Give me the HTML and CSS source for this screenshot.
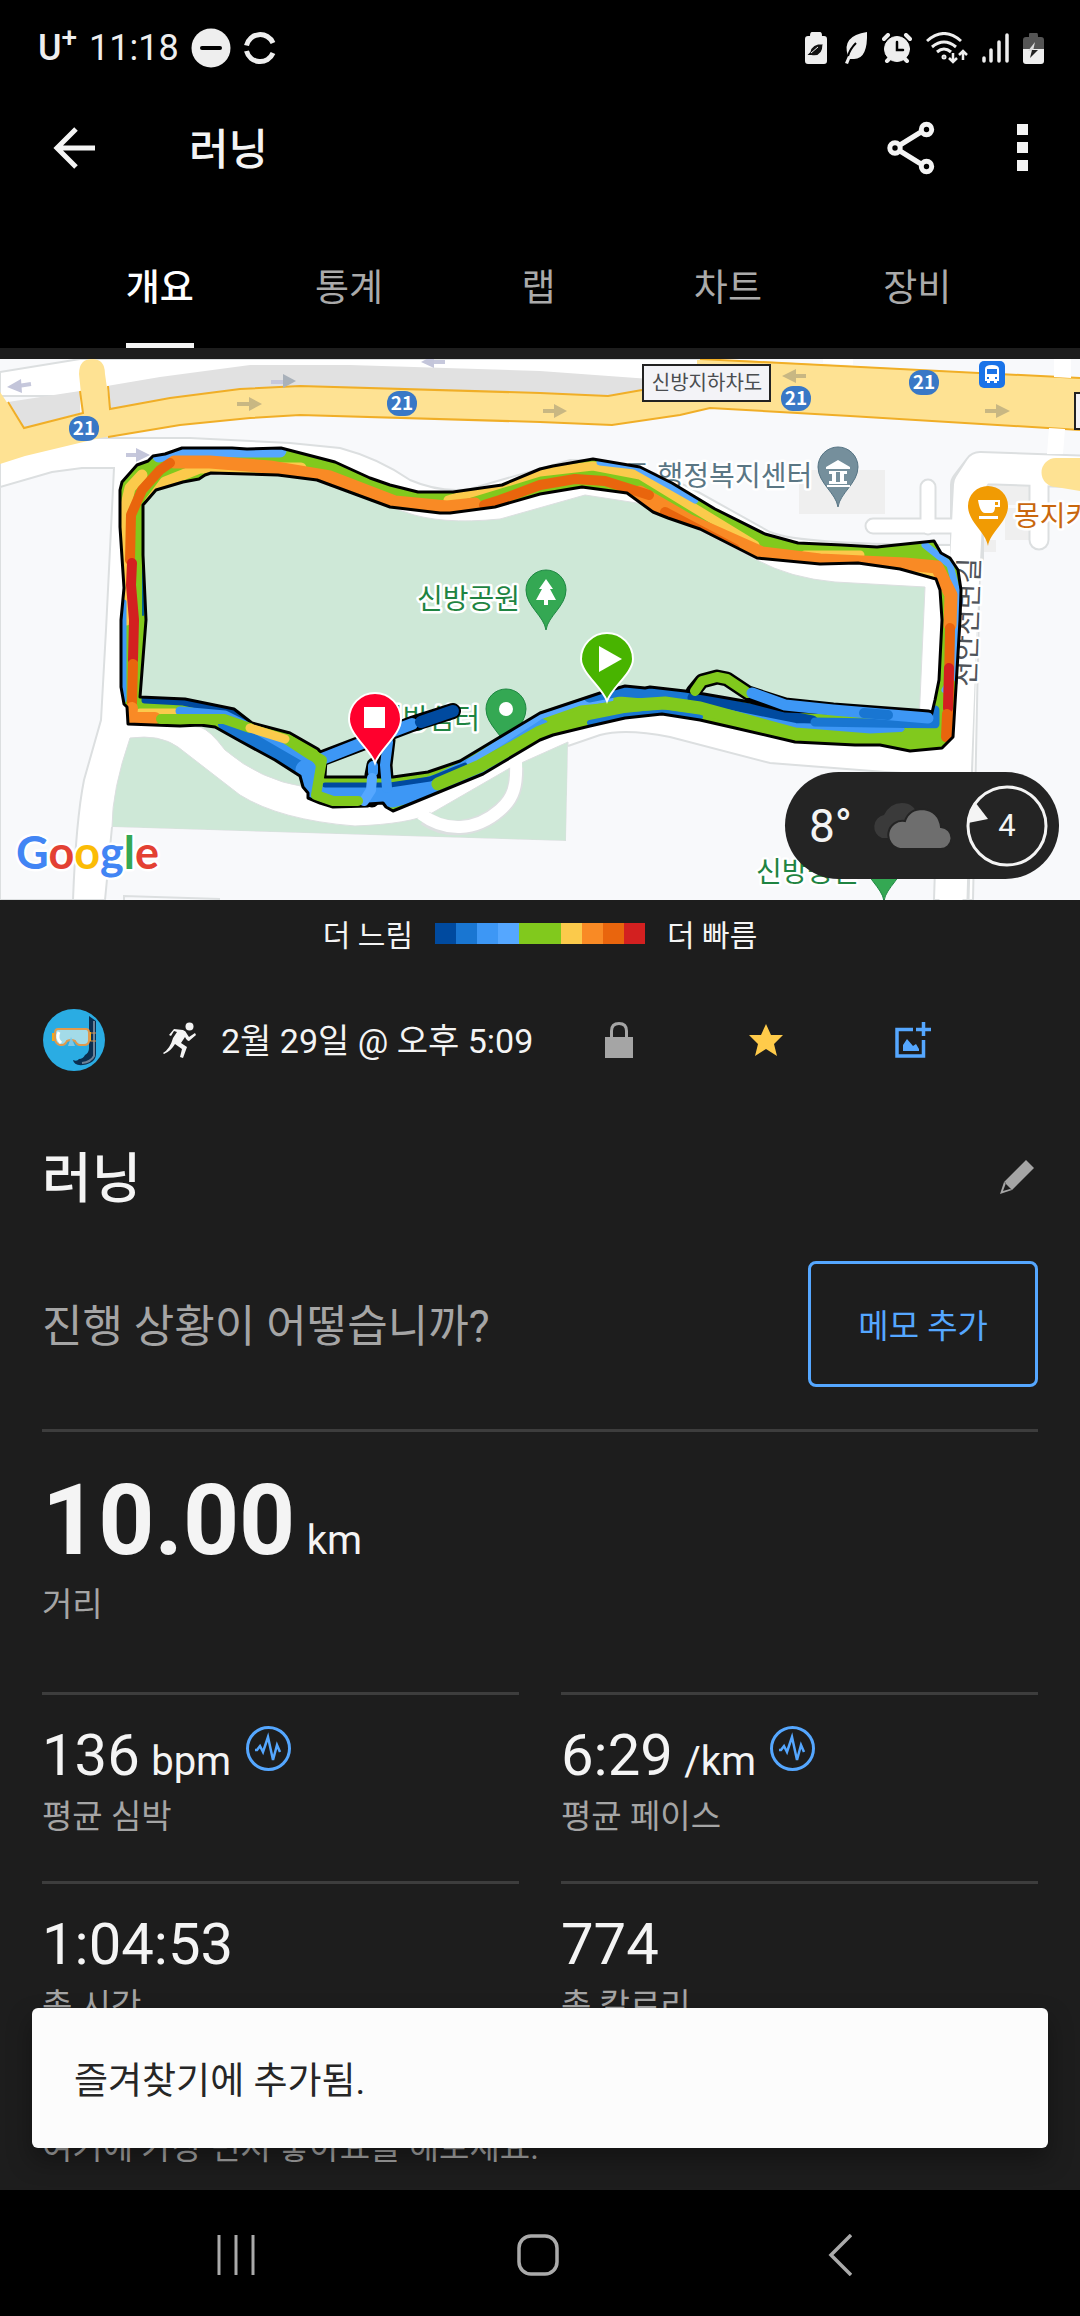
FILE: index.html
```html
<!DOCTYPE html>
<html lang="ko">
  <head>
    <meta charset="UTF-8">
    <meta name="viewport" content="width=device-width, initial-scale=1.0">
    <title>러닝</title>
    <link rel="stylesheet" href="styles.css">
  </head>
  <body>
    <header class="app-header">
      <div class="status-bar">
        <div class="status-left">
          <span class="carrier">U<sup>+</sup></span>
          <span class="clock">11:18</span>
          <svg width="40" height="40" viewBox="0 0 40 40" fill="#eee"><circle cx="20" cy="20" r="19.5"/><path d="M11 20h18" stroke="#000" stroke-width="4" stroke-linecap="round"/></svg>
          <svg width="34" height="34" viewBox="0 0 34 34" fill="none" stroke="#eee" stroke-width="5"><path d="M3.500 14.500A14 14 0 0 1 30 12M3.500 20A14 14 0 0 0 30 22"/></svg>
        </div>
        <div class="status-right">
          <svg width="22" height="32" viewBox="0 0 22 32" fill="#eee"><path d="M7 0h8q2 0 2 4h2q3 0 3 3v22q0 3-3 3H3q-3 0-3-3V7q0-3 3-3h2q0-4 2-4z"/><path d="M18 12Q7 12 5.500 20l-3 3h4q11 2 11-11z" fill="#111"/><path d="M6 21l7-6" stroke="#eee"/></svg>
          <svg width="27" height="32" viewBox="-2 0 27 32" fill="#eee"><path d="M24 0Q25 28 10 27H7L5 32 2 31 5 24Q-2 4 24 0z"/><path d="M13 11Q7 17 5 24" stroke="#000" stroke-width="2" fill="none"/></svg>
          <svg width="30" height="30" viewBox="0 0 30 30" fill="#eee" stroke="#eee" stroke-linecap="round"><circle cx="15" cy="16" r="12.500"/><path d="M2 6l4-4M28 6l-4-4M5 28l3-3M25 28l-3-3" stroke-width="4"/><path d="M15 9v8h6" stroke="#000" stroke-width="2.500" fill="none"/></svg>
          <svg width="42" height="32" viewBox="0 0 42 32" fill="none" stroke="#eee" stroke-width="3"><path d="M1 9Q18-6 35 9M6 15q12-10 24 0M11 20q7-6 14 0"/><circle cx="18" cy="25" r="1" /><path d="M27 21v9M23 26l4 4 4-4M37 28v-9M33 23l4-4 4 4" stroke-width="2.500"/></svg>
          <svg width="27" height="30" viewBox="1 0 27 30" stroke="#eee" stroke-width="3.500" stroke-linecap="round"><path d="M3 25v3M10 17v11M18 9v19M26 2v26"/></svg>
          <svg width="21" height="31" viewBox="0 0 21 31"><path d="M6 1q0-1 1-1h7q1 0 1 4h3q3 0 3 3v9H0V7q0-3 3-3h3z" fill="#555"/><path d="M0 16h21v12q0 3-3 3H3q-3 0-3-3z" fill="#eee"/><path d="M12 9L5 18h5z" fill="#ddd"/><path d="M15 17H9l-2 8z" fill="#222"/></svg>
        </div>
      </div>
      <div class="toolbar">
        <button class="icon-button back-button" type="button" aria-label="뒤로">
          <svg width="42" height="42" viewBox="0 0 42 42" fill="none" stroke="#f4f4f4" stroke-width="5"><path d="M23 2L4 21l19 19M4 21h38"/></svg>
        </button>
        <h1 class="toolbar-title">러닝</h1>
        <button class="icon-button" type="button" aria-label="공유">
          <svg width="48" height="54" viewBox="0 0 48 54" fill="none" stroke="#f4f4f4" stroke-width="5"><path d="M13 24l21-13M13 30l21 13"/><circle cx="8" cy="27" r="5.200"/><circle cx="39.500" cy="8.500" r="5.200"/><circle cx="39.500" cy="45.500" r="5.200"/></svg>
        </button>
        <button class="icon-button menu-button" type="button" aria-label="더보기">
          <svg width="12" height="50" viewBox="0 0 12 50" fill="#f4f4f4"><path d="M0 1h11v11H0zM0 19h11v11H0zM0 37h11v11H0z"/></svg>
        </button>
      </div>
      <nav class="tabs">
        <a class="tab active" href="#overview">개요</a>
        <a class="tab" href="#stats">통계</a>
        <a class="tab" href="#laps">랩</a>
        <a class="tab" href="#charts">차트</a>
        <a class="tab" href="#gear">장비</a>
      </nav>
    </header>

    <main class="content" id="overview">
      <section class="map">
        <svg class="map-canvas" viewBox="0 359 1080 541">
          <defs>
            <path id="loop" d="M122 482L137 465 148 461 153 456 165 454 182 448H232L247 449 281 448 335 462 370 478 390 485 418 492H453L502 485 540 469 553 466 593 459 640 467 672 483 715 509 765 534 798 543 842 545 877 547 934 541 941 553 950 558 958 570 961 590 960 620 953 737 942 748 910 751 880 745 855 745 795 742 735 728 700 720 662 714 625 718 590 726 553 735 540 740 483 774 393 811 386 807 383 803 368 804V806L333 807 320 803 308 798V793L303 787 300 776 275 760 240 741 215 727 200 725 180 726 128 724 127 707 124 704 121 687V620L124 588 120 527V490ZM143 505L156 490 183 482 199 479 205 475 211 473 278 475 317 480 390 507 440 513H450L495 507 540 494 582 487 627 493 653 512 668 518 700 529 757 558 820 564 858 563 900 569 936 579 940 590 942 620 939 680 935 700 931 717 785 711 750 702 704 694 685 691 650 687 645 688 625 686 600 693 540 713 515 728 460 761 428 772 393 777H325L326 759 318 749 290 733 252 723 234 709 185 699 140 697 146 620 143 555Z"/>
            <clipPath id="loop-clip"><use href="#loop" clip-rule="evenodd"/></clipPath>
            <path id="pin" d="M0 0C-2-14-20-24-20-40A20 20 0 1 1 20-40C20-24 2-14 0 0Z"/>
          </defs>
          <rect y="359" width="1080" height="541" fill="#f8f9fb"/>

          <!-- streets -->
          <g fill="#fff">
            <path d="M0 372L80 359H700V396H0Z" stroke="#dcdfe0" stroke-width="2"/>
            <path d="M0 440L100 438 190 438 290 443 340 448Q378 458 410 480 440 493 470 489L570 460Q640 460 700 493L770 532Q800 545 960 545L980 560 973 900H0Z" stroke="#dcdfe0" stroke-width="2"/>
          </g>
          <path d="M0 487L52 472 82 468H114L106 630 101 720 84 780Q76 820 73 900H0Z" fill="#f8f9fb" stroke="#dcdfe0" stroke-width="2"/>
          <g fill="#efefef"><path d="M799 470h86v44h-86zM988 485h50v20h-50zM1005 508h30v32h-30zM981 540h15v12h-15z"/></g>
          <g fill="none" stroke-linecap="round" stroke-linejoin="round">
            <g stroke="#dcdfe0">
              <path d="M873 526h90M928 487v40" stroke-width="17"/>
              <path d="M1039 470v70" stroke-width="21"/>
              <path d="M1095 472L980 468 967 485V560" stroke-width="34"/>
            </g>
            <path d="M978 545L968 900" stroke="#dcdfe0" stroke-width="3"/>
            <g stroke="#fff">
              <path d="M873 526h90M928 487v40" stroke-width="13"/>
              <path d="M1039 470v70" stroke-width="17"/>
              <path d="M1095 472L980 468 969 485 963 600 951 890" stroke-width="30"/>
            </g>
          </g>

          <!-- park and blocks -->
          <g fill="#cee8d7" stroke="#dcdfe0" stroke-width="1">
            <path d="M143 475H300L405 512Q440 525 500 519L585 495 650 505 757 560Q790 578 835 582L925 587 919 722 600 700 540 730 430 790 305 787Q260 780 225 750 210 730 200 727L135 722Z"/>
            <path d="M130 738Q160 734 178 747L240 795Q280 820 355 826 410 824 432 813L510 768 568 742 566 841 112 827Q112 790 130 738Z"/>
          </g>
          <path d="M425 818C445 832 475 832 500 810 514 798 517 785 516 768" fill="none" stroke="#dcdfe0" stroke-width="15"/>
          <path d="M421 814C445 832 475 832 500 810 514 798 517 785 516 762" fill="none" stroke="#fff" stroke-width="12"/>
          <path d="M568 746L600 735Q625 728 670 737L770 763 885 772 938 775 934 900H105L112 827 566 841Z" fill="#f8f9fb"/>
          <path d="M568 746L600 735Q625 728 670 737L770 763 885 772 938 775 934 900M105 900L112 827M220 899L124 896V900" fill="none" stroke="#dcdfe0" stroke-width="2"/>

          <!-- highway -->
          <path d="M8 402L80 391V413L24 428ZM107 386L160 377 250 365H350L540 371 650 379V392L610 397 300 387 240 389 110 409Z" fill="#e1e1e1"/>
          <path d="M0 392L24 428 83 413 79 374Q79 359 92 359T105 374L110 409 170 398 240 389 300 386 540 393 608 396 642 390 697 372V360H740L1080 378V430L850 416 710 408 680 415 612 425 540 422 300 415 250 418 180 425 100 438 25 456 0 464Z" fill="#fee293"/>
          <path d="M8 402L24 428 83 413 80 391M108 386L110 409 170 398 240 389 300 386 540 393 608 396 642 390M700 359L1080 378M1080 430L850 416 710 408 680 415 612 425 540 422 300 415 250 418 180 425 108 437" fill="none" stroke="#f0ae27" stroke-width="2"/>
          <path d="M1080 458H1056A14 14 0 0 0 1056 487L1080 491Z" fill="#fee293"/>
          <path d="M823 359h30v6l-30-2zM1054 359h17v19l-17-1zM1049 428l16 1-2 25h-16z" fill="#fff"/>
          <g fill="none" stroke="#c6c8dc" stroke-width="4">
            <path d="M31 384L18 386M445 362h-12M126 455h12M271 382h14" />
            <path d="M237 404h14M543 411h14M806 376h-14M985 411h14" stroke="#c8b783"/>
          </g>
          <g fill="#c3c5da"><path d="M7 387l14-8 1 14zM421 362l13-7v13zM150 455l-14-7v14z"/><path d="M296 381l-13-7v14z" fill="#a9b1ba"/><path d="M262 404l-13-7v14zM567 411l-13-7v14zM782 376l14-7v14zM1010 411l-14-7v14z" fill="#c8b783"/></g>
          <g fill="#3978c6">
            <rect x="69" y="416" width="30" height="25" rx="12"/><rect x="387" y="391" width="30" height="25" rx="12"/><rect x="781" y="386" width="30" height="25" rx="12"/><rect x="909" y="370" width="30" height="25" rx="12"/>
          </g>
          <g class="shield-text"><text x="84" y="435">21</text><text x="402" y="410">21</text><text x="796" y="405">21</text><text x="924" y="389">21</text></g>
          <rect x="979" y="361" width="26" height="27" rx="5" fill="#1a73e8"/>
          <path d="M985 369q0-4 7-4t7 4v12h-2v2h-3v-2h-4v2h-3v-2h-2z" fill="#fff"/><path d="M987 369h10v5h-10zM987 377h2v2h-2zM995 377h2v2h-2z" fill="#1a73e8"/>
          <rect x="643" y="365" width="127" height="36" fill="#f3f3f7" stroke="#222" stroke-width="2"/>
          <rect x="1075" y="393" width="20" height="36" fill="#f3f3f7" stroke="#222" stroke-width="2"/>
          <text class="map-box-text" x="707" y="390">신방지하차도</text>

          <!-- places -->
          <g class="map-label">
            <text class="green" x="417" y="609">신방공원</text>
            <text class="green" x="377" y="729">신방쉼터</text>
            <text class="green" x="756" y="882">신방공원</text>
            <text class="slate" x="624" y="486">동 행정복지센터</text>
            <text class="amber" x="1014" y="526">몽지카페</text>
            <text class="street" transform="translate(975 687) rotate(-88)">천안천변길</text>
          </g>
          <use href="#pin" x="838" y="507" fill="#758f9c" stroke="#567484"/>
          <path d="M826 467l12-7 12 7v2h-24zM829 471h18v3h-3v7h3v3h-18v-3h3v-7h-3zM827 485h23v2h-23z" fill="#fff"/><path d="M836 472h4v10h-4z" fill="#758f9c"/>
          <use href="#pin" x="988" y="546" fill="#f19b03"/>
          <path d="M978 500h22v7h-5q0 6-4 6h-6q-5 0-7-13zM979 516h19v3h-19z" fill="#fff"/><path d="M995 502h3v3h-3z" fill="#f19b03"/>
          <use href="#pin" x="546" y="630" fill="#34a853" stroke="#1e8742"/>
          <path d="M546 579l7 10h-3l6 11h-8v5h-4v-5h-8l6-11h-3z" fill="#fff"/>
          <use href="#pin" x="506" y="749" fill="#34a853" stroke="#1e8742"/>
          <circle cx="506" cy="709" r="7" fill="#fff"/>
          <use href="#pin" x="884" y="901" fill="#34a853" stroke="#1e8742"/>

          <!-- pace-coloured track -->
          <g fill="none" stroke-linejoin="round" stroke-linecap="round">
            <g stroke="#000">
              <path d="M320 759L370 740 412 724 453 711" stroke-width="16"/>
              <path d="M374 765L372 775V800M388 740L385 765 387 790M693 692L702 681 717 677 727 679 748 693 785 705 833 710 928 717" stroke-width="15"/>
            </g>
            <use href="#loop" fill="#81c91d" fill-rule="evenodd"/>
            <g clip-path="url(#loop-clip)" stroke-width="13">
              <path d="M159 456L182 451H280" stroke="#55a7ff"/>
              <path d="M126 620V505L130 488 142 475M150 502L165 482 200 468 301 468" stroke="#fbca4b" stroke-width="11"/>
              <path d="M320 480L400 507M448 500L540 472 593 466 640 475 755 545M805 555H860M910 567L945 580" stroke="#fbca4b" stroke-width="9"/>
              <path d="M600 462L635 466 695 500M925 545L950 565 959 600 957 670 945 690" stroke="#55a7ff" stroke-width="7"/>
              <path d="M124 602V700" stroke="#3d97f5" stroke-width="5"/>
              <path d="M143 520V615" stroke="#006196" stroke-width="2"/>
              <path d="M174 462H210L270 467 330 477 395 502 447 507 475 504M640 492L690 521 762 553 820 560 905 564 937 567 951 595 950 625" stroke="#f98a25"/>
              <path d="M630 502L690 532" stroke="#f98a25" stroke-width="16"/>
              <path d="M170 463L160 470 142 490 131 515 130 560M484 505L500 500 540 485 575 479 605 481 649 495M950 628L948 737M665 512L735 549" stroke="#e9650d" stroke-width="10"/>
              <path d="M132 563L131 585 134 620 133 660M949 668L948 708" stroke="#d32020" stroke-width="10"/>
              <path d="M145 700L183 702 235 713 260 732" stroke="#004a9f" stroke-width="7"/>
              <path d="M140 715H175" stroke="#fbca4b"/>
              <path d="M180 711L225 715 255 730 310 766" stroke="#3d97f5" stroke-width="9"/>
              <path d="M225 724L255 742 300 768" stroke="#1976d2" stroke-width="14"/>
              <path d="M306 770L316 792M325 795L393 797 440 784 480 764 540 729" stroke="#3d97f5" stroke-width="21"/>
              <path d="M325 785H390L430 779 465 765" stroke="#004a9f" stroke-width="5"/>
              <path d="M470 762L540 716 580 702 610 699" stroke="#55a7ff" stroke-width="7"/>
              <path d="M590 723L625 716 662 712 700 717" stroke="#1976d2" stroke-width="6"/>
              <path d="M590 696L620 690 690 696 730 705" stroke="#1976d2"/>
              <path d="M694 698L740 708 812 722" stroke="#004a9f"/>
              <path d="M725 714L795 728 900 731" stroke="#3d97f5" stroke-width="10"/>
              <path d="M815 722L935 724V710" stroke="#1976d2" stroke-width="9"/>
              <path d="M438 784L480 766 540 732 590 712 620 706 665 703 700 708 795 734 870 740 930 737" stroke="#81c91d"/>
              <path d="M909 737H940" stroke="#81c91d" stroke-width="17"/>
              <path d="M133 664L132 703M947 714L946 737" stroke="#e9650d" stroke-width="10"/>
              <path d="M132 708L131 718H155" stroke="#f98a25" stroke-width="12"/>
            </g>
            <use href="#loop" stroke="#000" stroke-width="3"/>
            <path d="M322 759L370 740 412 724" stroke="#3d97f5" stroke-width="12"/>
            <path d="M421 722L453 711" stroke="#004a9f" stroke-width="12"/>
            <path d="M388 742L385 765 387 788M373 772V766" stroke="#3d97f5" stroke-width="10"/>
            <path d="M372 778L371 790 364 801" stroke="#55a7ff" stroke-width="10"/>
            <path d="M161 719H224L250 728M287 739L322 760 316 795 333 801H358M695 691L702 681 717 677 727 679 748 693" stroke="#81c91d" stroke-width="10"/>
            <path d="M250 728L285 739" stroke="#fbca4b" stroke-width="9"/>
            <path d="M752 693L785 705 833 710 928 718" stroke="#3d97f5" stroke-width="11"/>
            <path d="M864 713L888 715" stroke="#1976d2" stroke-width="10"/>
          </g>
          <g transform="translate(375 763)">
            <path d="M0 0C-5-14-26-28-26-44A26 26 0 1 1 26-44C26-28 5-14 0 0Z" fill="#ff002d" stroke="#fff" stroke-width="2"/>
            <path d="M-11-56h21v21h-21z" fill="#fff"/>
          </g>
          <g transform="translate(607 701)">
            <path d="M0 0C-5-14-26-28-26-42A26 26 0 1 1 26-42C26-28 5-14 0 0Z" fill="#48b400" stroke="#fff" stroke-width="2"/>
            <path d="M-8-55L15-42-8-29z" fill="#fff"/>
          </g>
          <text class="google" x="16" y="869"><tspan fill="#4285f4">G</tspan><tspan fill="#e34133">o</tspan><tspan fill="#fbbc05">o</tspan><tspan fill="#4285f4">g</tspan><tspan fill="#34a853">l</tspan><tspan fill="#e34133">e</tspan></text>
        </svg>
        <div class="weather">
          <span class="temperature">8°</span>
          <svg width="82" height="48" viewBox="0 0 82 48"><path d="M12 36A12 12 0 0 1 14 13Q20 1 32 1T48 14L30 36Z" fill="#3a3a3a"/><path d="M30 47A14 14 0 1 1 35 19Q39 7 53 7 69 9 71 25A11 11 0 0 1 70 47Z" fill="#6e6e6e" stroke="#242424" stroke-width="2"/></svg>
          <div class="wind">
            <svg width="82" height="84" viewBox="0 0 82 84"><circle cx="41" cy="42" r="39" fill="none" stroke="#f4f4f4" stroke-width="3"/><path d="M9 18L22 35 2 39Q2 27 9 18z" fill="#f4f4f4"/></svg>
            <span class="wind-speed">4</span>
          </div>
        </div>
      </section>

      <div class="legend">
        <span>더 느림</span>
        <div class="legend-bar">
          <i class="pace-1"></i><i class="pace-2"></i><i class="pace-3"></i><i class="pace-4"></i><i class="pace-5"></i><i class="pace-5"></i><i class="pace-6"></i><i class="pace-7"></i><i class="pace-8"></i><i class="pace-9"></i>
        </div>
        <span>더 빠름</span>
      </div>

      <div class="activity-meta">
        <svg class="avatar" width="62" height="62" viewBox="0 0 62 62"><circle cx="31" cy="31" r="31" fill="#2aace3"/><path d="M46 7l7 5v33q0 9-13 11-9 1-10-5 4 2 6-1 4 0 6-4 4-2 4-7z" fill="#0b2e4f"/><path d="M51 12v35q-3 6-12 7" fill="none" stroke="#6d8297" stroke-width="2"/><path d="M46 24h7M46 32h7" stroke="#d89047"/><rect x="9" y="24" width="3" height="8" fill="#f5a81c"/><rect x="44" y="23" width="4" height="9" fill="#f5a81c"/><path d="M15 20h28q3 0 3 4v7q0 5-5 5h-4q-3 0-5-4-4-2-8 0-2 4-5 4h-2q-5-1-5-7v-5q0-4 3-4z" fill="#a3dbe8" stroke="#e09a4d" stroke-width="2"/><path d="M16 23q-3 6 2 11" stroke="#fff" stroke-width="3" fill="none"/><path d="M28 28l4 9h-7z" fill="#7cc8e8"/></svg>
        <svg class="runner" width="34" height="36" viewBox="0 0 34 36" fill="#f4f4f4"><circle cx="26.500" cy="4.500" r="4"/><path d="M11 7L20 8q3 1 4 4l2 3 6-4 1 2-7 6q-2 0-4-4l-4 6 6 4-4 11-3-1 2-8-7-5q-4 7-11 10l-1-1q7-4 10-15l4-6-3-1-3 5-2-1z"/></svg>
        <time class="activity-date">2월 29일 @ 오후 5:09</time>
        <button class="icon-button" type="button" aria-label="비공개">
          <svg width="28" height="36" viewBox="0 0 28 36"><path d="M0 15h28v21H0z" fill="#a5a5a5"/><path d="M6.500 16V9q0-7.500 7.500-7.500T21.500 9v7" fill="none" stroke="#a5a5a5" stroke-width="3"/></svg>
        </button>
        <button class="icon-button" type="button" aria-label="즐겨찾기">
          <svg width="36" height="34" viewBox="0 0 36 34" fill="#ffcb4a"><path d="M18 1l5 11h12l-9 9 3 12-11-7-11 7 3-12-9-9h12z"/></svg>
        </button>
        <button class="icon-button" type="button" aria-label="사진 추가">
          <svg width="36" height="36" viewBox="0 0 36 36" fill="none" stroke="#55a7ff" stroke-width="3.500"><path d="M18 7.500H2V34h26.500V18M28.500 0v14M21 7.500h15"/><path d="M8 29V23l4-6 6 7 3-2 3 5v2z" fill="#55a7ff" stroke="none"/></svg>
        </button>
      </div>

      <div class="title-row">
        <h2 class="activity-title">러닝</h2>
        <button class="icon-button" type="button" aria-label="제목 편집">
          <svg width="36" height="36" viewBox="0 0 36 36" fill="#a5a5a5"><path d="M27 1l8 8-22 22-8-8zM5 23L1 35l12-4-2-1-7 2 3-8z"/></svg>
        </button>
      </div>

      <div class="note-row">
        <p class="note-prompt">진행 상황이 어떻습니까?</p>
        <button class="note-button" type="button">메모 추가</button>
      </div>

      <section class="distance">
        <p class="distance-value">10.00 <small>km</small></p>
        <p class="label">거리</p>
      </section>

      <section class="stats">
        <div class="stat">
          <p class="stat-value">136 <small>bpm</small>
            <svg class="pulse" width="45" height="45" viewBox="0 0 45 45" fill="none" stroke="#55a7ff"><circle cx="22.500" cy="22.500" r="21" stroke-width="3"/><path d="M9 24h2l3-4 3 6 5-15 5 23 4-15 3 7" stroke-width="2.500"/></svg>
          </p>
          <p class="label">평균 심박</p>
        </div>
        <div class="stat">
          <p class="stat-value">6:29 <small>/km</small>
            <svg class="pulse" width="45" height="45" viewBox="0 0 45 45" fill="none" stroke="#55a7ff"><circle cx="22.500" cy="22.500" r="21" stroke-width="3"/><path d="M9 24h2l3-4 3 6 5-15 5 23 4-15 3 7" stroke-width="2.500"/></svg>
          </p>
          <p class="label">평균 페이스</p>
        </div>
        <div class="stat">
          <p class="stat-value">1:04:53</p>
          <p class="label">총 시간</p>
        </div>
        <div class="stat">
          <p class="stat-value">774</p>
          <p class="label">총 칼로리</p>
        </div>
      </section>

      <p class="likes">여기에 가장 먼저 좋아요를 해보세요.</p>

      <div class="snackbar" role="status">즐겨찾기에 추가됨.</div>
    </main>

    <footer class="system-nav">
      <button class="icon-button" type="button" aria-label="최근 앱">
        <svg width="38" height="42" viewBox="0 0 38 42" stroke="#aaa" stroke-width="3"><path d="M2 1v40M19 1v40M36 1v40"/></svg>
      </button>
      <button class="icon-button" type="button" aria-label="홈">
        <svg width="42" height="42" viewBox="0 0 42 42" fill="none" stroke="#aaa" stroke-width="3.500"><rect x="2" y="2" width="38" height="38" rx="12"/></svg>
      </button>
      <button class="icon-button" type="button" aria-label="뒤로">
        <svg width="24" height="42" viewBox="0 0 24 42" fill="none" stroke="#aaa" stroke-width="3.500"><path d="M23 1L3 21l20 20"/></svg>
      </button>
    </footer>
  </body>
</html>
```
FILE: styles.css
```css
* {
  margin: 0;
  padding: 0;
  box-sizing: border-box;
}

body {
  font-family: Roboto, 'Noto Sans CJK KR', sans-serif;
  background: #000;
  color: #f4f4f4;
  min-height: 100vh;
  display: flex;
  flex-direction: column;
}

svg {
  flex: none;
}

.icon-button {
  display: flex;
  align-items: center;
  justify-content: center;
  background: none;
  border: none;
  cursor: pointer;
}

/* header */
.status-bar {
  height: 96px;
  padding: 0 36px 0 38px;
  display: flex;
  align-items: center;
  justify-content: space-between;
  color: #eee;
}

.status-left {
  display: flex;
  align-items: center;
  gap: 12px;
  line-height: 40px;
}

.carrier {
  font-size: 36px;
  font-weight: 500;
}

.carrier sup {
  font-size: 28px;
  line-height: 0;
}

.clock {
  font-size: 36px;
}

.status-right {
  display: flex;
  align-items: center;
  gap: 14px;
}

.toolbar {
  height: 104px;
  padding: 0 41px 0 53px;
  display: flex;
  align-items: center;
}

.toolbar-title {
  flex: 1;
  margin-left: 94px;
  padding-bottom: 4px;
  font-size: 43px;
  font-weight: 500;
}

.menu-button {
  padding: 0 10px 0 82px;
}

.tabs {
  height: 148px;
  padding: 24px 68px 0 65px;
  display: grid;
  grid-template-columns: repeat(5, 1fr);
  justify-items: center;
}

.tab {
  display: flex;
  align-items: center;
  border-top: 2px solid transparent;
  border-bottom: 5px solid transparent;
  color: #aaa;
  font-size: 37px;
  text-decoration: none;
}

.tab.active {
  color: #fff;
  font-weight: 500;
  border-bottom-color: #f4f4f4;
}

/* map */
.content {
  position: relative;
  flex: 1;
  padding-top: 11px;
  background: #1d1d1d;
}

.map {
  position: relative;
}

.map-canvas {
  display: block;
  width: 100%;
  font-family: 'Noto Sans CJK KR', sans-serif;
}

.shield-text {
  fill: #fff;
  font-size: 19px;
  font-weight: 700;
  text-anchor: middle;
}

.map-box-text {
  fill: #4a4d50;
  font-size: 20px;
  text-anchor: middle;
}

.map-label {
  font-size: 28px;
  stroke: #fff;
  stroke-width: 5px;
  stroke-linejoin: round;
  paint-order: stroke;
}

.green {
  fill: #1f8442;
}

.slate {
  fill: #5a7684;
}

.amber {
  fill: #c9670d;
}

.street {
  fill: #50545a;
}

.google {
  font-family: Lato, sans-serif;
  font-size: 45px;
  font-weight: 700;
  stroke: #fff;
  stroke-width: 5px;
  stroke-linejoin: round;
  paint-order: stroke;
}

.weather {
  position: absolute;
  right: 21px;
  bottom: 21px;
  height: 107px;
  padding: 0 11px 0 24px;
  display: flex;
  align-items: center;
  border-radius: 54px;
  background: #242424;
}

.temperature {
  margin-right: 18px;
  font-size: 46px;
}

.wind {
  position: relative;
  display: flex;
  margin-left: 14px;
}

.wind-speed {
  position: absolute;
  inset: 0;
  display: flex;
  align-items: center;
  justify-content: center;
  font-size: 31px;
}

.legend {
  height: 66px;
  display: flex;
  align-items: center;
  justify-content: center;
  gap: 22px;
  font-size: 30px;
}

.legend-bar {
  display: flex;
  width: 210px;
  height: 21px;
}

.legend-bar i {
  flex: 1;
}

.pace-1 { background: #004a9f; }
.pace-2 { background: #1976d2; }
.pace-3 { background: #3d97f5; }
.pace-4 { background: #55a7ff; }
.pace-5 { background: #81c91d; }
.pace-6 { background: #fbca4b; }
.pace-7 { background: #f98a25; }
.pace-8 { background: #e9650d; }
.pace-9 { background: #d32020; }

/* activity details */
.activity-meta {
  height: 148px;
  padding: 0 94px 0 43px;
  display: grid;
  grid-template-columns: 120px 58px 1fr 147px 147px 147px;
  align-items: center;
}

.activity-date {
  padding-bottom: 3px;
  font-size: 34px;
}

.title-row {
  height: 126px;
  padding: 0 45px 0 42px;
  display: flex;
  align-items: center;
  justify-content: space-between;
}

.activity-title {
  padding-bottom: 6px;
  font-size: 54px;
  font-weight: 500;
}

.note-row {
  margin: 0 42px;
  padding: 21px 0 42px;
  display: flex;
  align-items: center;
  justify-content: space-between;
  border-bottom: 3px solid #3d3d3d;
}

.note-prompt {
  padding-bottom: 3px;
  color: #a5a5a5;
  font-size: 44px;
}

.note-button {
  height: 126px;
  padding: 0 47px;
  border: 3px solid #55a7ff;
  border-radius: 8px;
  background: none;
  color: #55a7ff;
  font: inherit;
  font-size: 33px;
  cursor: pointer;
}

.distance {
  height: 260px;
  padding: 31px 42px 0;
}

.distance-value {
  height: 118px;
  font-size: 98px;
  font-weight: 700;
  line-height: 116px;
}

.distance-value small {
  margin-left: -13px;
  font-size: 40px;
  font-weight: 400;
}

.label {
  color: #a5a5a5;
  font-size: 33px;
  line-height: 48px;
}

.stats {
  padding: 0 42px;
  display: grid;
  grid-template-columns: 1fr 1fr;
  column-gap: 42px;
}

.stat {
  height: 189px;
  padding-top: 22px;
  border-top: 3px solid #3d3d3d;
}

.stat-value {
  height: 76px;
  font-size: 58px;
  line-height: 76px;
}

.stat-value small {
  margin-left: -3px;
  font-size: 40px;
}

.pulse {
  vertical-align: 4px;
}

.likes {
  padding: 54px 42px 18px;
  color: #a5a5a5;
  font-size: 33px;
  line-height: 48px;
}

.snackbar {
  position: absolute;
  left: 32px;
  right: 32px;
  bottom: 42px;
  height: 140px;
  padding: 0 42px;
  display: flex;
  align-items: center;
  border-radius: 6px;
  background: #fcfcfc;
  color: #262626;
  font-size: 37px;
  box-shadow: 0 12px 24px rgba(0, 0, 0, 0.35);
}

.system-nav {
  height: 126px;
  padding: 3px 89px 0 85px;
  display: grid;
  grid-template-columns: repeat(3, 1fr);
  background: #000;
}
```
